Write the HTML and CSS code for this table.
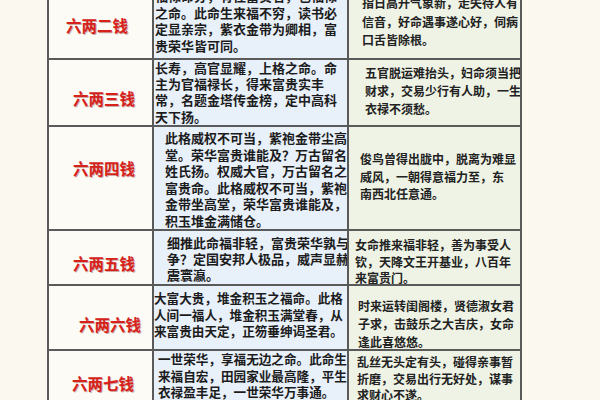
FILE: index.html
```html
<!DOCTYPE html>
<html lang="zh">
<head>
<meta charset="utf-8">
<title>称骨</title>
<link rel="stylesheet" href="styles.css">
</head>
<body>
<div class="sheet">
  <div class="cell lab r1">六两二钱</div>
  <div class="cell mid r1">福禄命分，有往富贵名，也福禄<br>之命。此命生来福不穷，读书必<br>定显亲宗，紫衣金带为卿相，富<br>贵荣华皆可同。</div>
  <div class="cell rgt r1">指日高升气象新，走失待人有<br>信音，好命遇事遂心好，伺病<br>口舌皆除根。</div>

  <div class="cell lab r2">六两三钱</div>
  <div class="cell mid r2">长寿，高官显耀，上格之命。命<br>主为官福禄长，得来富贵实丰<br>常，名题金塔传金榜，定中高科<br>天下扬。</div>
  <div class="cell rgt r2">五官脱运难抬头，妇命须当把<br>财求，交易少行有人助，一生<br>衣禄不须愁。</div>

  <div class="cell lab r3">六两四钱</div>
  <div class="cell mid r3">此格威权不可当，紫袍金带尘高<br>堂。荣华富贵谁能及？万古留名<br>姓氏扬。权威大官，万古留名之<br>富贵命。此格威权不可当，紫袍<br>金带坐高堂，荣华富贵谁能及，<br>积玉堆金满储仓。</div>
  <div class="cell rgt r3">俊鸟曾得出胧中，脱离为难显<br>威风，一朝得意福力至，东<br>南西北任意通。</div>

  <div class="cell lab r4">六两五钱</div>
  <div class="cell mid r4">细推此命福非轻，富贵荣华孰与<br>争？定国安邦人极品，威声显赫<br>震寰瀛。</div>
  <div class="cell rgt r4">女命推来福非轻，善为事受人<br>钦，天降文王开基业，八百年<br>来富贵门。</div>

  <div class="cell lab r5">六两六钱</div>
  <div class="cell mid r5 tight">大富大贵，堆金积玉之福命。此格<br>人间一福人，堆金积玉满堂春，从<br>来富贵由天定，正笏垂绅谒圣君。</div>
  <div class="cell rgt r5">时来运转闺阁楼，贤德淑女君<br>子求，击鼓乐之大吉庆，女命<br>逢此喜悠悠。</div>

  <div class="cell lab r6">六两七钱</div>
  <div class="cell mid r6 tight">一世荣华，享福无边之命。此命生<br>来福自宏，田园家业最高隆，平生<br>衣禄盈丰足，一世荣华万事通。</div>
  <div class="cell rgt r6">乱丝无头定有头，碰得亲事暂<br>折磨，交易出行无好处，谋事<br>求财心不遂。</div>
</div>
</body>
</html>
```
FILE: styles.css
```css
html, body {
  margin: 0;
  padding: 0;
  width: 600px;
  height: 400px;
  overflow: hidden;
  background: #fbf8ef;
}

.sheet {
  display: grid;
  grid-template-columns: 105px 195px 173px;
  grid-template-rows: 72px 67px 104px 55px 65px 80px;
  margin-left: 47px;
  margin-top: -12px;
  width: 473px;
  border-left: 2px solid #5a5a5a;
  font-family: "Noto Sans CJK SC", "Noto Sans", sans-serif;
}

.cell {
  box-sizing: border-box;
  border-right: 2px solid #5a5a5a;
  border-bottom: 2px solid #5a5a5a;
  overflow: hidden;
  white-space: nowrap;
}

.lab {
  background: #fdfbf6;
  color: #d7221c;
  font-size: 15.5px;
  font-weight: 700;
  line-height: 20px;
  text-shadow: 1px 1px 0 rgba(110, 20, 10, 0.35);
}

.mid {
  background: #e8f0fa;
  color: #1c1c1c;
  font-size: 13px;
  font-weight: 700;
  line-height: 16.6px;
}

.mid.tight {
  font-size: 12.6px;
}

.rgt {
  background: #eef3e5;
  color: #222;
  font-size: 12px;
  font-weight: 700;
  line-height: 18px;
}

.lab.r1 { padding: 27px 0 0 17px; }
.lab.r2 { padding: 28px 0 0 24px; }
.lab.r3 { padding: 31px 0 0 24px; }
.lab.r4 { padding: 22px 0 0 24px; }
.lab.r5 { padding: 28px 0 0 30px; }
.lab.r6 { padding: 22px 0 0 23px; }

.mid.r1 { padding: 0 0 0 1px; }
.mid.r2 { padding: 0 0 0 1px; line-height: 16.2px; }
.mid.r3 { padding: 3px 0 0 11px; }
.mid.r4 { padding: 4px 0 0 13px; line-height: 16.2px; }
.mid.r5 { padding: 4px 0 0 0; }
.mid.r6 { padding: 0 0 0 4px; }

.rgt.r1 { padding: 6px 0 0 13px; line-height: 18.5px; }
.rgt.r2 { padding: 4px 0 0 16px; }
.rgt.r3 { padding: 23px 0 0 11px; line-height: 17.5px; }
.rgt.r4 { padding: 6px 0 0 6px; line-height: 16.5px; }
.rgt.r5 { padding: 11px 0 0 9px; }
.rgt.r6 { padding: 3px 0 0 8px; line-height: 16.5px; }
```
